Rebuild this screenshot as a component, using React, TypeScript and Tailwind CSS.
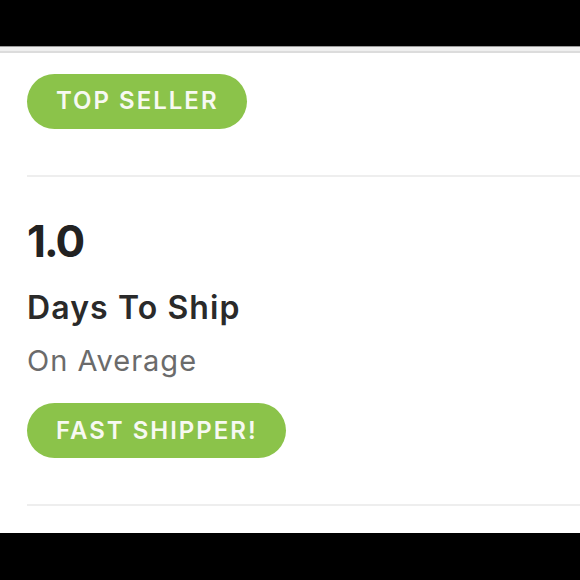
import React from "react";

export default function App() {
  return (
    <div className="w-[580px] h-[580px] bg-white flex flex-col overflow-hidden" style={{ fontFamily: "Inter, 'Open Sans', sans-serif" }}>
      <div className="h-[46px] bg-black shrink-0" />
      <div className="h-[1px] bg-[#9a9a9a] shrink-0" />
      <div className="h-[4px] bg-[#efefef] shrink-0" />
      <div className="h-[2px] bg-[#dcdcdc] shrink-0" />
      <div className="flex-1 flex flex-col pl-[27px]">
        <div className="mt-[21px] h-[55px] w-[220px] rounded-full bg-[#8bc34a] flex items-center pl-[29px]">
          <span className="text-[#f7f9f2] text-[24px] font-semibold tracking-[2px] leading-none -mt-[1px]">TOP SELLER</span>
        </div>
        <div className="mt-[46px] h-[2px] bg-[#eeeeee]" />
        <div className="mt-[42px] text-[44px] font-bold text-[#222222] leading-[44px] tracking-[-2px]">1.0</div>
        <div className="mt-[30px] text-[32px] font-semibold text-[#2a2a2a] leading-[30px] tracking-[1.1px]">Days To Ship</div>
        <div className="mt-[24px] text-[29px] text-[#6b6b6b] leading-[28px] tracking-[1px]">On Average</div>
        <div className="mt-[28px] h-[55px] w-[259px] rounded-full bg-[#8bc34a] flex items-center pl-[29px]">
          <span className="text-[#f7f9f2] text-[24px] font-semibold tracking-[2px] leading-none">FAST SHIPPER!</span>
        </div>
        <div className="mt-[46px] h-[2px] bg-[#eeeeee]" />
      </div>
      <div className="h-[47px] bg-black shrink-0" />
    </div>
  );
}
